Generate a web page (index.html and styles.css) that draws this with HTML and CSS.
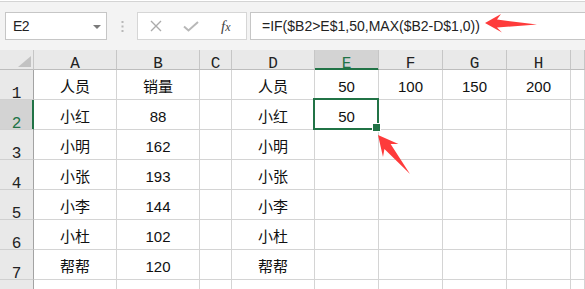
FILE: index.html
```html
<!DOCTYPE html>
<html lang="zh-CN">
<head>
    <meta charset="UTF-8">
    <meta name="viewport" content="width=device-width, initial-scale=1.0">
    <title>销量 - 工作表</title>
    <link rel="stylesheet" href="styles.css">
</head>
<body>
    <div class="toolbar">
        <div class="name-box">
            <span>E2</span>
            <span class="drop"></span>
        </div>
        <div class="grip">
            <svg width="3" height="11" viewBox="0 0 3 11">
                <rect x="0.5" y="0" width="2" height="2" fill="#b8b8b8"/>
                <rect x="0.5" y="4.5" width="2" height="2" fill="#b8b8b8"/>
                <rect x="0.5" y="9" width="2" height="2" fill="#b8b8b8"/>
            </svg>
        </div>
        <div class="func-box">
            <svg class="icon-x" width="12" height="12" viewBox="0 0 12 12">
                <path d="M1 1 L11 11 M11 1 L1 11" stroke="#ababab" stroke-width="1.4" fill="none"/>
            </svg>
            <svg class="icon-ok" width="16" height="11" viewBox="0 0 16 11">
                <path d="M1 5.5 L5.5 9.5 L15 1" stroke="#b8b8b8" stroke-width="2" fill="none"/>
            </svg>
            <i class="fx">f<span>x</span></i>
        </div>
        <div class="formula">=IF($B2&gt;E$1,50,MAX($B2-D$1,0))</div>
    </div>

    <div class="sheet">
        <div class="corner"><span class="tri"></span></div>
        <div class="ch">A</div>
        <div class="ch">B</div>
        <div class="ch">C</div>
        <div class="ch">D</div>
        <div class="ch sel">E</div>
        <div class="ch">F</div>
        <div class="ch">G</div>
        <div class="ch">H</div>
        <div class="ch"></div>

        <div class="rh">1</div>
        <div class="c">人员</div>
        <div class="c">销量</div>
        <div class="c"></div>
        <div class="c">人员</div>
        <div class="c">50</div>
        <div class="c">100</div>
        <div class="c">150</div>
        <div class="c">200</div>
        <div class="c"></div>

        <div class="rh sel">2</div>
        <div class="c">小红</div>
        <div class="c">88</div>
        <div class="c"></div>
        <div class="c">小红</div>
        <div class="c active">50</div>
        <div class="c"></div>
        <div class="c"></div>
        <div class="c"></div>
        <div class="c"></div>

        <div class="rh">3</div>
        <div class="c">小明</div>
        <div class="c">162</div>
        <div class="c"></div>
        <div class="c">小明</div>
        <div class="c"></div>
        <div class="c"></div>
        <div class="c"></div>
        <div class="c"></div>
        <div class="c"></div>

        <div class="rh">4</div>
        <div class="c">小张</div>
        <div class="c">193</div>
        <div class="c"></div>
        <div class="c">小张</div>
        <div class="c"></div>
        <div class="c"></div>
        <div class="c"></div>
        <div class="c"></div>
        <div class="c"></div>

        <div class="rh">5</div>
        <div class="c">小李</div>
        <div class="c">144</div>
        <div class="c"></div>
        <div class="c">小李</div>
        <div class="c"></div>
        <div class="c"></div>
        <div class="c"></div>
        <div class="c"></div>
        <div class="c"></div>

        <div class="rh">6</div>
        <div class="c">小杜</div>
        <div class="c">102</div>
        <div class="c"></div>
        <div class="c">小杜</div>
        <div class="c"></div>
        <div class="c"></div>
        <div class="c"></div>
        <div class="c"></div>
        <div class="c"></div>

        <div class="rh">7</div>
        <div class="c">帮帮</div>
        <div class="c">120</div>
        <div class="c"></div>
        <div class="c">帮帮</div>
        <div class="c"></div>
        <div class="c"></div>
        <div class="c"></div>
        <div class="c"></div>
        <div class="c"></div>

        <!-- row 8 is only partly in view, its number falls below the edge -->
        <div class="rh"></div>
        <div class="c"></div>
        <div class="c"></div>
        <div class="c"></div>
        <div class="c"></div>
        <div class="c"></div>
        <div class="c"></div>
        <div class="c"></div>
        <div class="c"></div>
        <div class="c"></div>
    </div>

    <!-- red pointers drawn over the sheet -->
    <svg class="marks" width="585" height="289" viewBox="0 0 585 289">
        <polygon points="485,23 501,14 497,19.5 537,24.5 497,27.5 502,32.5" fill="#fe3b3b"/>
        <polygon points="378,135 398.4,144.1 390.6,144.1 410,174 384.4,149.1 383,156.9" fill="#fe3b3b"/>
    </svg>
</body>
</html>
```

FILE: styles.css
```css
* {
    box-sizing: border-box;
}
html, body {
    margin: 0;
    padding: 0;
}
body {
    width: 585px;
    height: 289px;
    overflow: hidden;
    position: relative;
    background-color: #ffffff;
    font-family: "Liberation Sans", "Noto Sans CJK SC", sans-serif;
}

/* formula bar */
.toolbar {
    margin-top: 1px;
    height: 49px;
    border-top: 1px solid #d4d4d4;
    background-color: #f3f3f3;
    display: flex;
    align-items: flex-start;
    padding: 10px 0 0 5px;
}
.name-box {
    width: 102px;
    height: 28px;
    background-color: white;
    border: 1px solid #c6c6c6;
    display: flex;
    align-items: center;
    justify-content: space-between;
    padding: 0 5px 0 7px;
    font-size: 14px;
    letter-spacing: -0.6px;
    color: #222;
}
.drop {
    width: 0;
    height: 0;
    border-left: 4px solid transparent;
    border-right: 4px solid transparent;
    border-top: 4px solid #7a7a7a;
    margin-top: 1px;
}
.grip {
    width: 30px;
    height: 28px;
    display: flex;
    align-items: center;
    justify-content: center;
}
.func-box {
    width: 110px;
    height: 28px;
    background-color: white;
    border: 1px solid #d6d6d6;
    display: flex;
    align-items: center;
    padding-left: 12px;
}
.icon-ok {
    margin-left: 21px;
}
.fx {
    margin-left: 22px;
    font-family: "Liberation Serif", serif;
    font-size: 15px;
    color: #444;
}
.fx span {
    font-size: 12px;
}
.formula {
    flex: 1;
    margin-left: 3px;
    margin-right: -2px;
    height: 28px;
    background-color: white;
    border: 1px solid #c6c6c6;
    display: flex;
    align-items: center;
    padding-left: 11px;
    font-size: 14px;
    color: #222;
    white-space: nowrap;
}

/* grid */
.sheet {
    display: grid;
    grid-template-columns: 34px 83px 83px 32px 83px 64px 64px 64px 64px 1fr;
    grid-template-rows: 20px repeat(8, 30px);
}
.corner {
    background-color: #e9e9e9;
    border-right: 1px solid #c6c6c6;
    border-bottom: 1px solid #bdbdbd;
    display: flex;
    align-items: flex-end;
    justify-content: flex-end;
    padding: 0 2px 2px 0;
}
.tri {
    width: 0;
    height: 0;
    border-left: 13px solid transparent;
    border-bottom: 11px solid #c2c2c2;
}
.ch, .rh {
    background-color: #e9e9e9;
    font-family: "Liberation Mono", monospace;
    font-size: 16px;
    line-height: 10px;
    color: #222;
    display: flex;
    align-items: flex-end;
    justify-content: center;
}
.ch {
    border-right: 1px solid #c6c6c6;
    border-bottom: 1px solid #bdbdbd;
}
.rh {
    border-right: 1px solid #a3a3a3;
    border-bottom: 1px solid #d0d0d0;
}
.ch.sel {
    background-color: #d3d3d3;
    color: #217346;
    border-bottom-color: #217346;
    box-shadow: inset 0 -1px #217346;
}
.rh.sel {
    background-color: #d3d3d3;
    color: #217346;
    border-right-color: #217346;
    box-shadow: inset -1px 0 #217346;
}
.c {
    border-right: 1px solid #d4d4d4;
    border-bottom: 1px solid #d4d4d4;
    display: flex;
    align-items: center;
    justify-content: center;
    padding-top: 4px;
    font-size: 15px;
    line-height: 17px;
    color: #111;
}
.active {
    position: relative;
}
.active::before { /* selection frame */
    content: "";
    position: absolute;
    left: -2px;
    top: -2px;
    right: -1px;
    bottom: -1px;
    border: 2px solid #217346;
}
.active::after { /* fill handle */
    content: "";
    position: absolute;
    right: -3px;
    bottom: -3px;
    width: 7px;
    height: 7px;
    background-color: #217346;
    border: 1px solid white;
}

.marks {
    position: absolute;
    left: 0;
    top: 0;
    pointer-events: none;
}
```
